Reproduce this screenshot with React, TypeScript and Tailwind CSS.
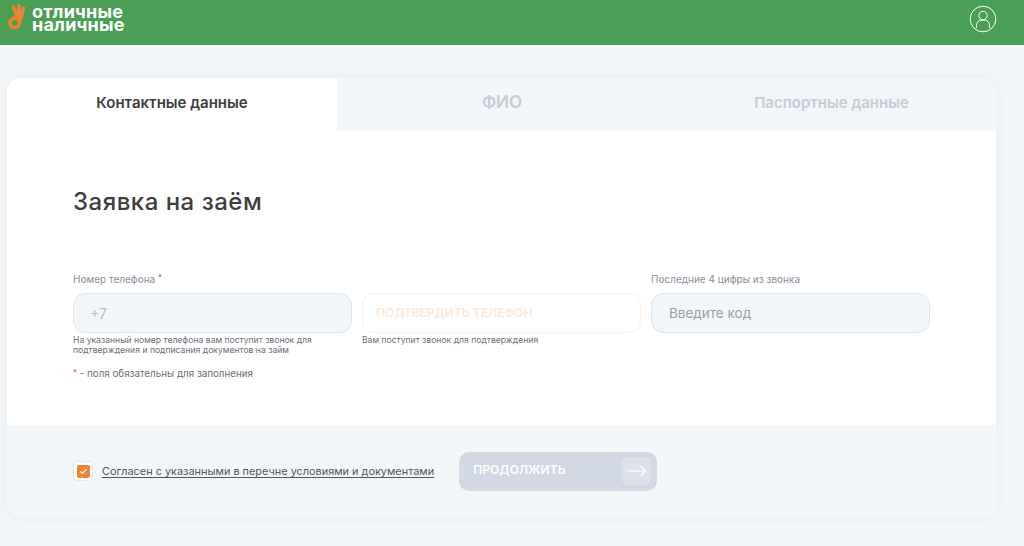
import { Check } from "lucide-react";

const font = "font-['Inter','Noto_Sans',sans-serif]";

const Logo = () => (
  <div className="flex items-start gap-[5px]">
    <svg width="20" height="28" viewBox="0 0 20 28" fill="none" className="shrink-0">
      <circle cx="7.7" cy="20" r="4.7" stroke="#ed8333" strokeWidth="3.6" />
      <path d="M6.4 4 L9 10" stroke="#ed8333" strokeWidth="3.4" strokeLinecap="round" />
      <path d="M12 2.5 L12 10" stroke="#ed8333" strokeWidth="3.4" strokeLinecap="round" />
      <path d="M16.6 5 L15 10" stroke="#ed8333" strokeWidth="3.4" strokeLinecap="round" />
      <path d="M7.5 9 H16.8 L16.4 13.5 L14 20 L10 15.5 L7.5 14 Z" fill="#ed8333" />
    </svg>
    <div className="text-white font-bold text-[18px] tracking-[0.2px] leading-[13px] pt-[2px]">
      <div>отличные</div>
      <div>наличные</div>
    </div>
  </div>
);

const UserIcon = () => (
  <svg width="28" height="28" viewBox="0 0 28 28" fill="none" stroke="#fff" strokeWidth="1">
    <circle cx="14" cy="14" r="12.8" />
    <circle cx="14" cy="10.5" r="4.2" />
    <path d="M7.5 23 V20.5 C7.5 17.5 9.5 15.5 11.5 15.2 H16.5 C18.5 15.5 20.5 17.5 20.5 20.5 V23" />
  </svg>
);

const Required = () => <span className="align-top text-[8px] leading-[10px] text-[#e5484d]">*</span>;

export default function App() {
  return (
    <div className={`${font} min-h-[546px] bg-[#f2f6f9] overflow-hidden`}>
      {/* Header */}
      <header className="h-[45px] bg-[#4a9f55] border-b border-[#479a52] flex items-start justify-between pl-[7px] pr-[27px]">
        <div className="pt-[3px]">
          <Logo />
        </div>
        <div className="pt-[5px]">
          <UserIcon />
        </div>
      </header>

      {/* Card */}
      <main className="ml-[7px] mt-[33px] w-[989px] rounded-[14px] overflow-hidden bg-white shadow-[0_0_12px_rgba(100,116,139,0.08)]">
        <div className="grid grid-cols-[330px_330px_329px] h-[53px] text-[15px] font-semibold">
          <div className="bg-white text-[#3d3d3d] flex items-center justify-center pb-[3px]">Контактные данные</div>
          <div className="bg-[#f2f6f9] text-[#c5ccd8] text-[17px] flex items-center justify-center pb-[3px]">ФИО</div>
          <div className="bg-[#f2f6f9] text-[#c5ccd8] flex items-center justify-center pb-[3px]">Паспортные данные</div>
        </div>

        <div className="h-[294px] px-[66px] pt-[53px]">
          <h1 className="text-[24px] leading-[36px] font-medium tracking-[0.5px] text-[#3d3d3d]">Заявка на заём</h1>

          <div className="mt-[52px] grid grid-cols-[279px_279px_279px] gap-x-[10px]">
            <div>
              <div className="text-[10px] leading-[14px] text-[#8a8f99]">
                Номер телефона <Required />
              </div>
              <div className="mt-[7px] h-[40px] rounded-[12px] bg-[#f2f6f9] border border-[#dfe5ee] flex items-center pl-[16px] text-[14px] text-[#b4bac5]">
                +7
              </div>
              <p className="mt-[2px] text-[8.6px] leading-[10px] text-[#6b7078]">
                На указанный номер телефона вам поступит звонок для подтверждения и подписания документов на займ
              </p>
              <p className="mt-[12px] text-[9.8px] leading-[14px] text-[#6b7078]">
                <Required /> - поля обязательны для заполнения
              </p>
            </div>

            <div>
              <div className="h-[14px]" />
              <div className="mt-[7px] h-[40px] rounded-[12px] bg-white border border-[#fdf0e3] flex items-center pl-[13px] text-[12px] font-semibold text-[#fde9d6]">
                ПОДТВЕРДИТЬ ТЕЛЕФОН
              </div>
              <p className="mt-[2px] text-[8.6px] leading-[10px] text-[#6b7078]">Вам поступит звонок для подтверждения</p>
            </div>

            <div>
              <div className="text-[10px] leading-[14px] text-[#8a8f99]">Последние 4 цифры из звонка</div>
              <div className="mt-[7px] h-[40px] rounded-[12px] bg-[#f2f6f9] border border-[#dfe5ee] flex items-center pl-[17px] text-[13.5px] text-[#9aa0ab]">
                Введите код
              </div>
            </div>
          </div>
        </div>

        {/* Footer */}
        <div className="h-[92px] bg-[#f2f6f9] pl-[66px] flex items-center">
          <div className="w-[20px] h-[20px] rounded-[4px] bg-white border border-[#e3e8f0] flex items-center justify-center">
            <div className="w-[13px] h-[13px] rounded-[2px] bg-[#ed8333] flex items-center justify-center">
              <Check className="w-[9px] h-[9px] text-white" strokeWidth={3} />
            </div>
          </div>
          <span className="ml-[9px] text-[10.9px] leading-[16px] text-[#55585e] underline underline-offset-2">
            Согласен с указанными в перечне условиями и документами
          </span>
          <button className="ml-[25px] w-[198px] h-[39px] rounded-[10px] bg-[#d3d9e4] flex items-center justify-between pl-[14px] pr-[6px] text-[12px] font-semibold tracking-[0.1px] text-white">
            <span className="mb-[2px]">ПРОДОЛЖИТЬ</span>
            <span className="w-[29px] h-[28px] rounded-[6px] bg-[#dde2ea] flex items-center justify-center">
              <svg width="20" height="12" viewBox="0 0 20 12" fill="none" stroke="#fff" strokeWidth="1.1">
                <path d="M1 6 H18.5" />
                <path d="M13.5 1 L18.5 6 L13.5 11" />
              </svg>
            </span>
          </button>
        </div>
      </main>
    </div>
  );
}
